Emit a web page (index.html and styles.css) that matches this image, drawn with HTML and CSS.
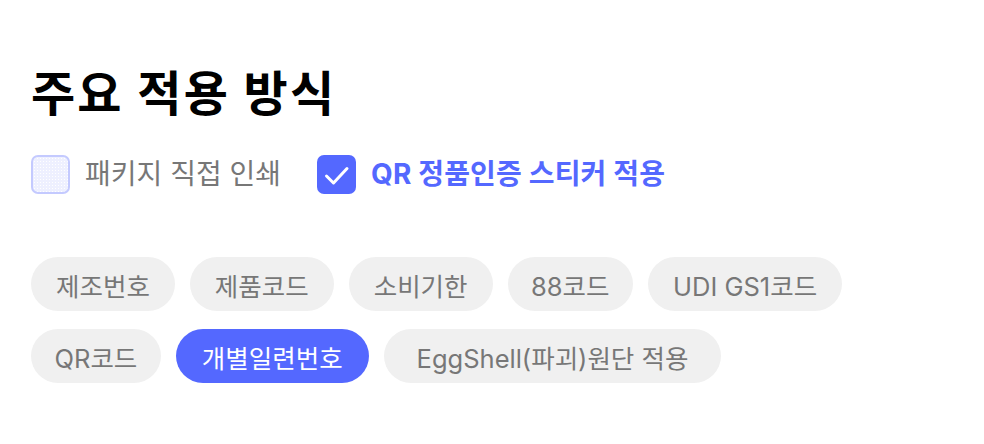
FILE: index.html
```html
<!DOCTYPE html>
<html lang="ko">
<head>
<meta charset="utf-8">
<link rel="stylesheet" href="styles.css">
</head>
<body>
<main class="panel">
  <h1 class="title">주요 적용 방식</h1>
  <div class="options">
    <label class="option">
      <span class="box"></span>
      <span class="option-text">패키지 직접 인쇄</span>
    </label>
    <label class="option option-checked">
      <span class="box box-checked">
        <svg width="39" height="39" viewBox="0 0 39 39"><path d="M9.5 21l7 7 13.5-14.5" fill="none" stroke="#fff" stroke-width="3" stroke-linecap="round" stroke-linejoin="round"/></svg>
      </span>
      <span class="option-text">QR 정품인증 스티커 적용</span>
    </label>
  </div>
  <div class="chips">
    <span class="chip">제조번호</span>
    <span class="chip">제품코드</span>
    <span class="chip">소비기한</span>
    <span class="chip chip-latin">88코드</span>
    <span class="chip">UDI GS1코드</span>
    <span class="chip chip-latin">QR코드</span>
    <span class="chip chip-active">개별일련번호</span>
    <span class="chip chip-wide">EggShell(파괴)원단 적용</span>
  </div>
</main>
</body>
</html>
```
FILE: styles.css
```css
html, body {
  margin: 0;
  padding: 0;
  background: #ffffff;
}
body {
  font-family: Inter, "Noto Sans CJK KR", sans-serif;
  width: 984px;
  height: 444px;
}
.panel {
  padding: 60px 0 0 31px;
}
.title {
  margin: 0;
  font-size: 48px;
  font-weight: 700;
  line-height: 68px;
  color: #000;
  letter-spacing: 2.2px;
}
.options {
  display: flex;
  align-items: center;
  gap: 36px;
  margin-top: 26px;
}
.option {
  display: flex;
  align-items: center;
  gap: 15px;
}
.box {
  box-sizing: border-box;
  width: 39px;
  height: 39px;
  border-radius: 7px;
  border: 2px solid #c4caff;
  background-color: #eef0ff;
  background-image: radial-gradient(#ffffff 0.6px, transparent 0.7px);
  background-size: 3px 3px;
  display: flex;
  align-items: center;
  justify-content: center;
}
.box-checked {
  border: none;
  background: #5468ff;
}
.option-text {
  font-size: 28px;
  color: #777777;
  line-height: 40px;
}
.option-checked .option-text {
  color: #5468ff;
  font-weight: 700;
  letter-spacing: 0.15px;
}
.chips {
  display: flex;
  flex-wrap: wrap;
  gap: 18px 15px;
  margin-top: 63px;
  width: 860px;
}
.chip {
  box-sizing: border-box;
  height: 54px;
  padding: 0 25px;
  border-radius: 27px;
  background: #f0f0f0;
  color: #777777;
  font-size: 25.5px;
  display: flex;
  align-items: center;
}
.chip-latin {
  padding: 0 23.5px;
}
.chip-active {
  background: #5468ff;
  color: #ffffff;
  padding: 0 26px;
}
.chip-wide {
  padding: 0 33px;
}
```
